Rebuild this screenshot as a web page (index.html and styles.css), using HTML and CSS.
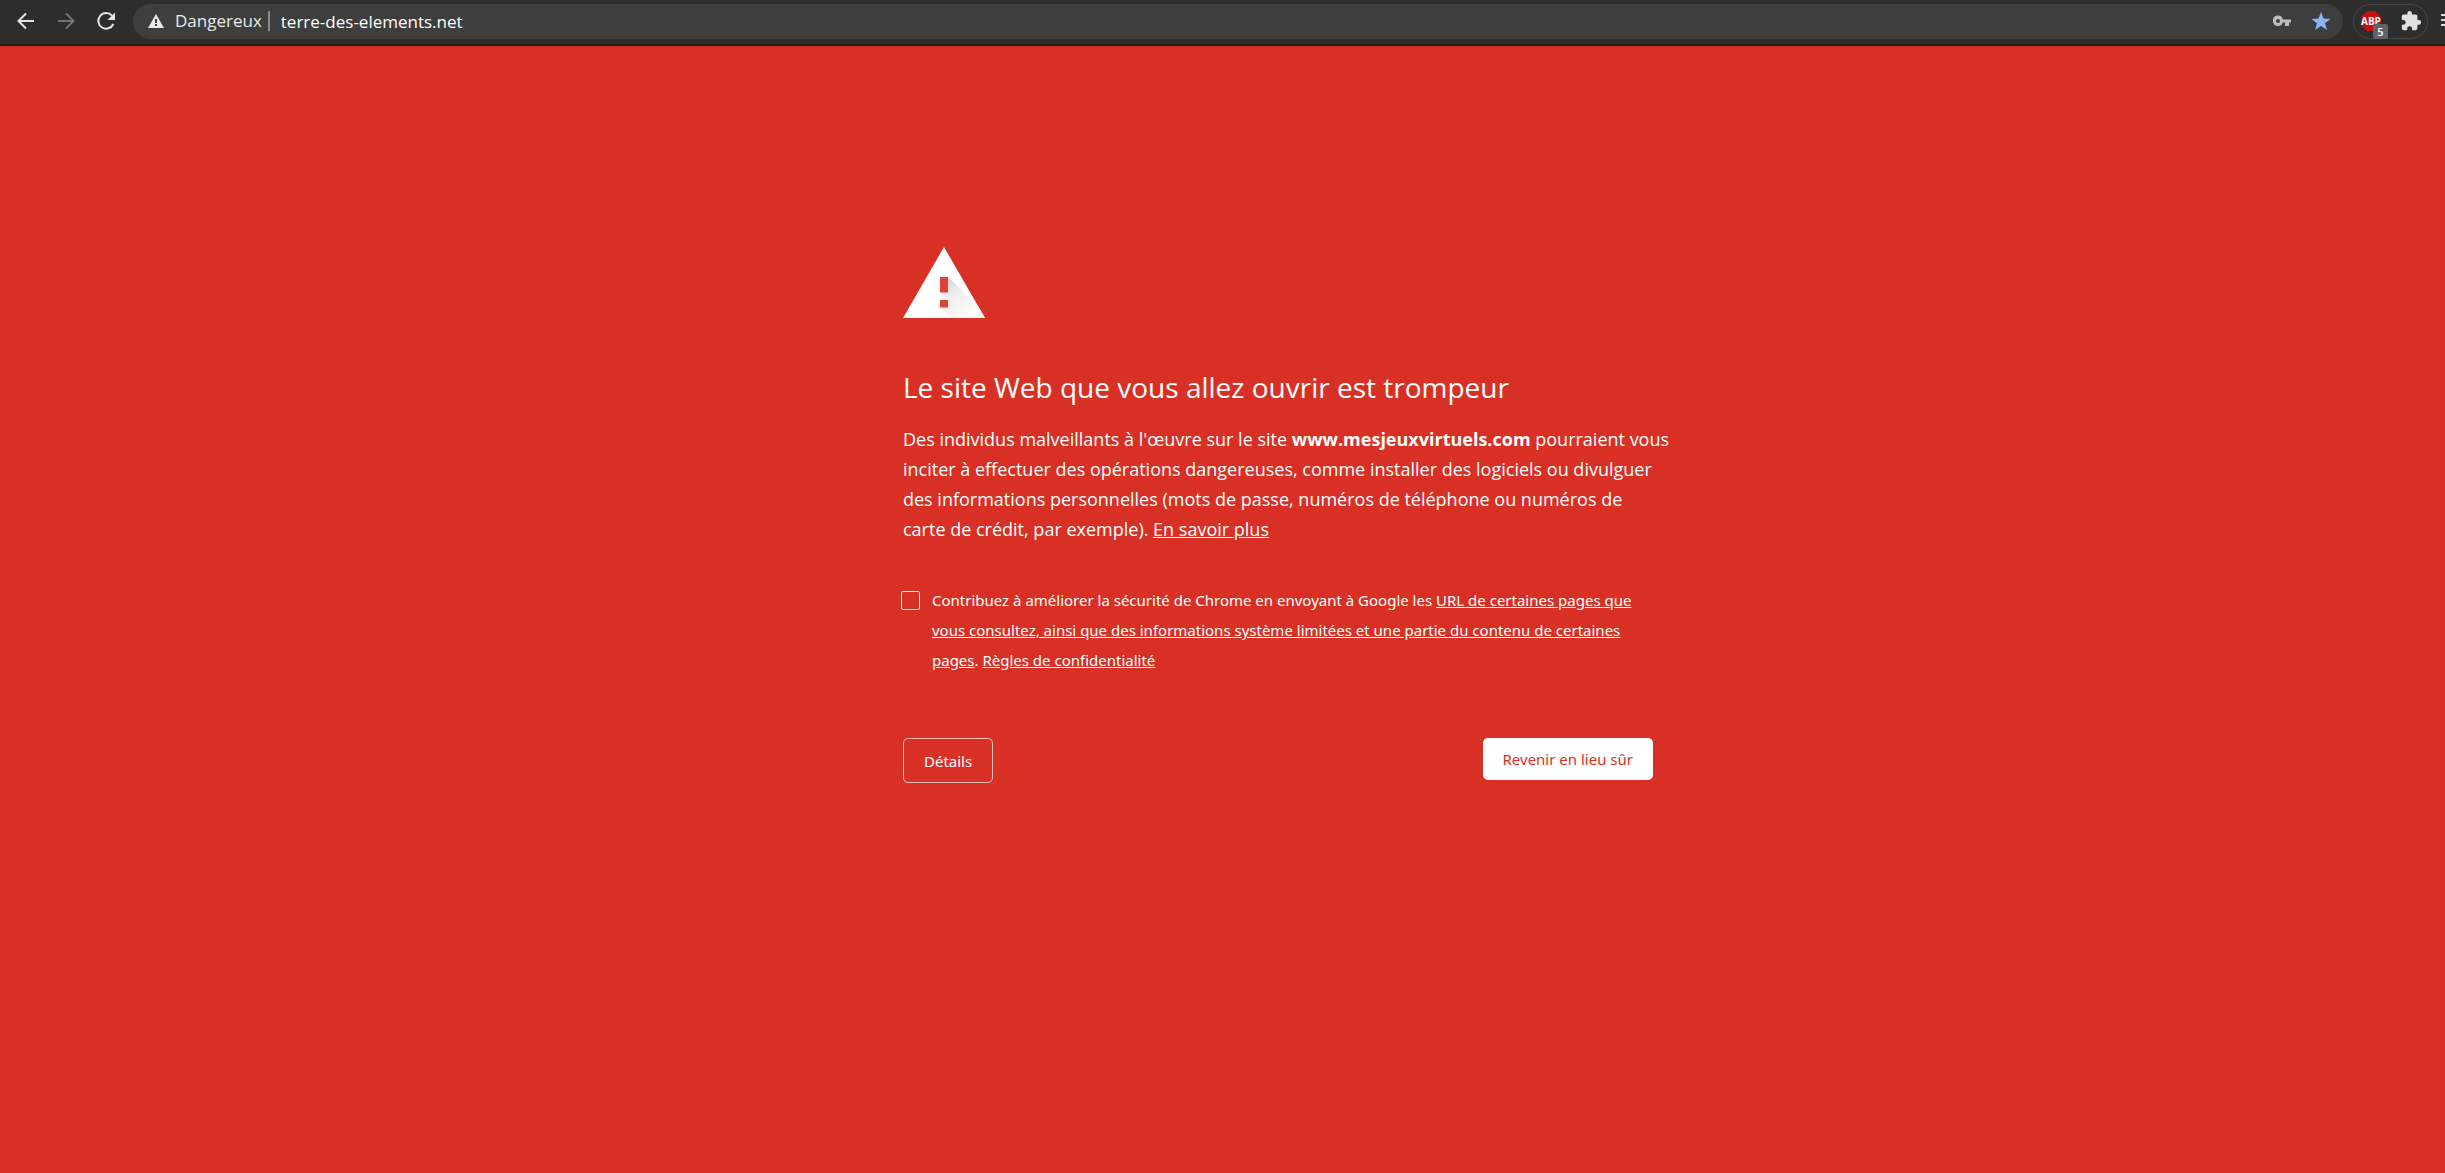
FILE: index.html
```html
<!DOCTYPE html>
<html lang="fr">
<head>
<meta charset="utf-8">
<title>Erreur de sécurité</title>
<link rel="stylesheet" href="styles.css">
</head>
<body>
<header class="toolbar">
  <nav class="nav" aria-label="Navigation">
    <button class="icon-button" type="button" aria-label="Retour">
      <svg width="24" height="24" viewBox="0 0 24 24" fill="none" stroke="#e4e4e4" stroke-width="2"><path d="M20 12H5M12 4.500L4.500 12L12 19.500"/></svg>
    </button>
    <button class="icon-button" type="button" aria-label="Avancer" disabled>
      <svg width="24" height="24" viewBox="0 0 24 24" fill="none" stroke="#737373" stroke-width="2"><path d="M4 12H19M12 4.500L19.500 12L12 19.500"/></svg>
    </button>
    <button class="icon-button" type="button" aria-label="Actualiser">
      <svg width="24" height="24" viewBox="0 0 24 24"><path d="M19.300 15A7.800 7.800 0 1 1 18 6.700" fill="none" stroke="#e4e4e4" stroke-width="2"/><path d="M21 3.500V11h-7.500z" fill="#e4e4e4"/></svg>
    </button>
  </nav>
  <div class="omnibox">
    <svg class="alert" width="16" height="14" viewBox="0 0 16 14"><path d="M8 0L16 14H0z" fill="#e8e8e8"/><path d="M7 5h2v4H7zM7 10h2v2H7z" fill="#3e3e3e"/></svg>
    <span class="status">Dangereux</span>
    <input class="url" type="text" value="terre-des-elements.net" aria-label="Adresse">
    <button class="icon-button" type="button" aria-label="Mots de passe">
      <svg width="18" height="12" viewBox="0 0 18 12"><path d="M5 0.500a5.200 5.200 0 1 0 4.900 7H12V11h4V7.500h2v-3H9.900A5.200 5.200 0 0 0 5 .5zM5 4a2 2 0 1 1 0 4 2 2 0 0 1 0-4z" fill="#bdbdbd" fill-rule="evenodd"/></svg>
    </button>
    <button class="icon-button" type="button" aria-label="Favori">
      <svg width="20" height="18" viewBox="0 0 20 18"><path d="M10 0l2.500 6.500 7 .4-5.500 4.400 2 6.700-6-3.900L4 18l2-6.700L.5 6.900l7-.4z" fill="#8ab4f8"/></svg>
    </button>
  </div>
  <div class="extensions">
    <button class="icon-button blocker" type="button" aria-label="ABP">
      <svg width="28" height="28" viewBox="0 0 28 28"><path d="M7 1h8l5.500 5.500v9L15 21H7l-5.500-5.500v-9z" fill="#c70d0d"/><text class="abp" x="1" y="15">ABP</text></svg>
      <span class="badge">5</span>
    </button>
    <button class="icon-button" type="button" aria-label="Extensions">
      <svg width="22" height="22" viewBox="0 0 24 24"><path d="M20.500 11H19V7c0-1.100-.9-2-2-2h-4V3.500a2.500 2.500 0 0 0-5 0V5H4c-1.100 0-2 .9-2 2v3.800h1.500a2.700 2.700 0 0 1 0 5.400H2V20c0 1.100.9 2 2 2h3.800v-1.500a2.700 2.700 0 0 1 5.400 0V22H17c1.100 0 2-.9 2-2v-4h1.500a2.500 2.500 0 0 0 0-5z" fill="#e0e0e0"/></svg>
    </button>
  </div>
  <button class="icon-button menu" type="button" aria-label="Menu">
    <svg width="16" height="14" viewBox="0 0 16 14"><path d="M0 1h16M0 6h16M0 11h16" stroke="#dcdcdc" stroke-width="2"/></svg>
  </button>
</header>
<main class="page">
  <section class="warning">
    <svg class="triangle" width="82" height="71" viewBox="0 0 82 71">
      <defs><linearGradient id="shade" gradientUnits="userSpaceOnUse" x1="40" y1="35" x2="66" y2="66"><stop offset="0" stop-color="#d4d4d4"/><stop offset=".45" stop-color="#f0f0f0"/><stop offset="1" stop-color="#fafafa"/></linearGradient></defs>
      <path d="M41 0L82 71H0z" fill="#fff"/>
      <path d="M45 30L75 59 82 71H47L37 60V53H45V52L37 45z" fill="url(#shade)"/>
      <path d="M37 30h8v15.500h-8zM37 53h8v7.500h-8z" fill="#db4437"/>
    </svg>
    <h1 class="title">Le site Web que vous allez ouvrir est trompeur</h1>
    <p class="text">Des individus malveillants à l'œuvre sur le site <strong>www.mesjeuxvirtuels.com</strong> pourraient vous<br>inciter à effectuer des opérations dangereuses, comme installer des logiciels ou divulguer<br>des informations personnelles (mots de passe, numéros de téléphone ou numéros de<br>carte de crédit, par exemple). <a href="#">En savoir plus</a></p>
    <div class="consent">
      <input class="check" type="checkbox" id="optin">
      <label class="consent-text" for="optin">Contribuez à améliorer la sécurité de Chrome en envoyant à Google les <a href="#">URL de certaines pages que<br>vous consultez, ainsi que des informations système limitées et une partie du contenu de certaines<br>pages</a>. <a href="#">Règles de confidentialité</a></label>
    </div>
    <div class="actions">
      <button class="button outline" type="button">Détails</button>
      <button class="button solid" type="button">Revenir en lieu sûr</button>
    </div>
  </section>
</main>
</body>
</html>
```
FILE: styles.css
```css
* { box-sizing: border-box; }
body {
  margin: 0;
  min-height: 100vh;
  background: #d93025;
  color: #fff;
  font-family: "Segoe UI", "Open Sans", "Noto Sans", sans-serif;
  overflow-x: hidden;
}
button { font: inherit; cursor: pointer; }
svg { display: block; }

.toolbar {
  display: flex;
  align-items: center;
  height: 46px;
  padding: 0 0 2px 14px;
  background: #2d2d2d;
  border-bottom: 2px solid #202020;
  overflow: hidden;
}
.nav { display: flex; gap: 16px; margin-right: 15px; }
.icon-button {
  flex: none;
  padding: 0;
  border: 0;
  background: none;
}
.omnibox {
  flex: 1;
  min-width: 0;
  display: flex;
  align-items: center;
  height: 35px;
  padding: 0 12px 0 15px;
  border-radius: 18px;
  background: #3e3e3e;
  gap: 20px;
}
.alert { flex: none; }
.status {
  margin-left: -9px;
  padding-right: 6px;
  border-right: 2px solid #8c8c8c;
  color: #e8e8e8;
  font-size: 17px;
  line-height: 20px;
}
.url {
  flex: 1;
  min-width: 0;
  margin-left: -9px;
  padding: 0;
  border: 0;
  outline: 0;
  background: none;
  color: #fff;
  font: inherit;
  font-size: 17px;
}
.extensions {
  display: flex;
  align-items: center;
  gap: 12px;
  height: 35px;
  margin-left: 10px;
  padding: 0 5px 0 6px;
  border: 1px solid #484848;
  border-radius: 18px;
}
.blocker { position: relative; }
.blocker svg { margin-top: 6px; }
.abp { fill: #fff; font: bold 10px "Open Sans", sans-serif; }
.badge {
  position: absolute;
  right: 0;
  bottom: -1px;
  width: 15px;
  height: 15px;
  border-radius: 2px;
  background: #5f6368;
  color: #fff;
  font-size: 11px;
  font-weight: 600;
  line-height: 15px;
  text-align: center;
}
.menu { width: 4px; margin-left: 13px; overflow: hidden; }

.page { padding: 201px 0 40px 111px; }
.warning { width: 100%; max-width: 750px; margin: 0 auto; }
.title {
  margin: 48px 0 16px;
  font-size: 28px;
  font-weight: 400;
  line-height: 42px;
}
.text { margin: 0; font-size: 18px; line-height: 30px; white-space: nowrap; }
a { color: inherit; text-decoration: underline; }
.consent {
  display: flex;
  gap: 12px;
  margin: 41px 0 0 -2px;
  font-family: "Segoe UI", "Noto Sans", "Open Sans", sans-serif;
  font-size: 15px;
  line-height: 30px;
}
.check {
  flex: none;
  appearance: none;
  width: 19px;
  height: 19px;
  margin: 6px 0 0;
  border: 1px solid #fff;
  border-radius: 2px;
}
.consent-text { white-space: nowrap; }
.actions {
  display: flex;
  justify-content: space-between;
  align-items: flex-start;
  margin-top: 63px;
}
.button {
  height: 42px;
  padding: 0 20px;
  border: 0;
  border-radius: 5px;
  font-family: "Segoe UI", "Noto Sans", "Open Sans", sans-serif;
  font-size: 15px;
}
.outline {
  height: 45px;
  border: 1px solid #f4c1bd;
  background: transparent;
  color: #fff;
}
.solid { background: #fff; color: #d93025; }
```
